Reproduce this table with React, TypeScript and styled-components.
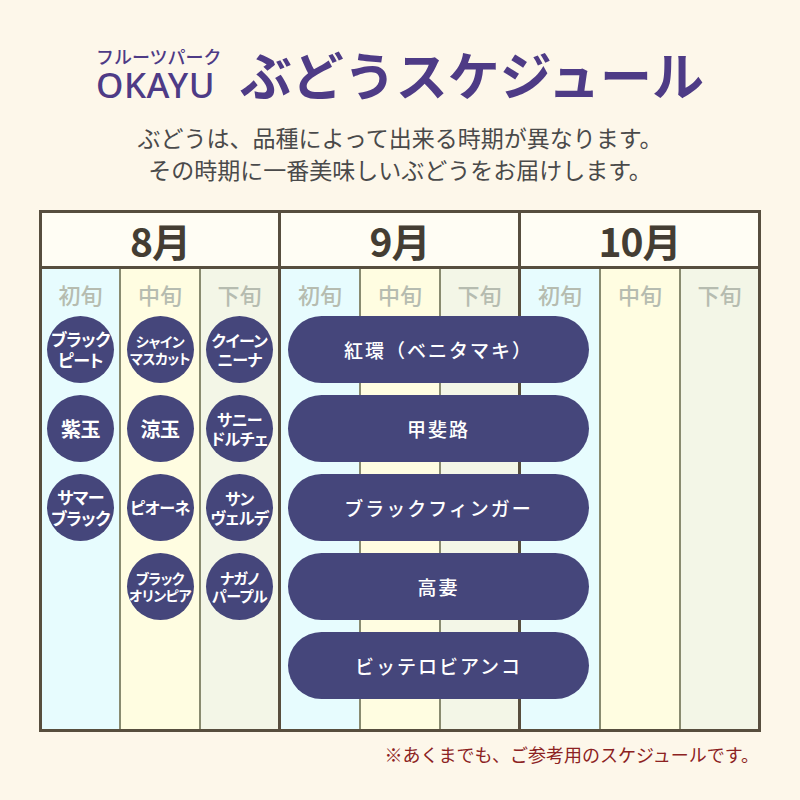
import React from "react";
import styled, { createGlobalStyle } from "styled-components";

const GlobalStyle = createGlobalStyle`
  html, body {
    margin: 0;
    padding: 0;
    background: #fdf7ea;
  }
  body {
    font-family: "Noto Sans CJK JP", "Noto Sans", sans-serif;
  }
  #root {
    width: 800px;
    height: 800px;
  }
`;

const Page = styled.div`
  width: 800px;
  height: 800px;
  padding-top: 44px;
  box-sizing: border-box;
  background: #fdf7ea;
`;

const Header = styled.header`
  display: flex;
  justify-content: center;
  align-items: center;
  gap: 18px;
`;

const Brand = styled.div`
  display: flex;
  flex-direction: column;
  color: #4e3b86;
`;

const BrandSub = styled.span`
  font-family: "Noto Sans CJK JP", sans-serif;
  font-size: 18px;
  font-weight: 500;
  line-height: 22px;
`;

const BrandName = styled.span`
  font-family: "Noto Sans", "Open Sans", sans-serif;
  font-size: 35px;
  font-weight: 500;
  line-height: 36px;
  letter-spacing: 0.5px;
`;

const Title = styled.h1`
  margin: 0;
  font-family: "Noto Sans CJK JP", sans-serif;
  font-size: 52px;
  font-weight: 700;
  line-height: 60px;
  color: #4e3b86;
`;

const Intro = styled.p`
  margin: 17px 0 0;
  text-align: center;
  font-size: 23px;
  line-height: 32px;
  color: #4a4a4a;
`;

const Table = styled.section`
  margin: 25px 0 0 39px;
  width: 722px;
  border: 3px solid #574e3e;
  box-sizing: border-box;
`;

const MonthRow = styled.div`
  display: grid;
  grid-template-columns: 236px 240px 240px;
  border-bottom: 3px solid #574e3e;
  background: #fffdf4;
`;

const MonthCell = styled.div<{ $first?: boolean }>`
  height: 53px;
  display: flex;
  align-items: center;
  justify-content: center;
  border-left: ${(p) => (p.$first ? "0" : "3px solid #574e3e")};
  font-size: 39px;
  font-weight: 700;
  color: #443d33;
  letter-spacing: -1px;
`;

const Body = styled.div`
  display: grid;
  grid-template-columns: 77px 80px 79px 81px 80px 79px 81px 80px 79px;
  grid-template-rows: 47px repeat(4, 79px) 97px;
`;

const columnBg: Record<string, string> = {
  early: "#e7fcfe",
  mid: "#fffde1",
  late: "#f3f6e7",
};

const Column = styled.div<{ $col: number; $kind: string; $border: number }>`
  grid-column: ${(p) => p.$col};
  grid-row: 1 / -1;
  background: ${(p) => columnBg[p.$kind]};
  border-left: ${(p) =>
    p.$border === 0
      ? "0"
      : p.$border === 3
      ? "3px solid #574e3e"
      : "2px solid #898b70"};
`;

const ColumnLabel = styled.div`
  height: 47px;
  padding-top: 3px;
  box-sizing: border-box;
  display: flex;
  align-items: center;
  justify-content: center;
  font-size: 22px;
  font-weight: 500;
  color: #b6bcb0;
`;

const Circle = styled.div<{ $col: number; $row: number; $shift: number; $size: number }>`
  grid-column: ${(p) => p.$col};
  grid-row: ${(p) => p.$row};
  align-self: start;
  justify-self: center;
  margin-left: ${(p) => p.$shift}px;
  width: 67px;
  height: 67px;
  border-radius: 50%;
  background: #45467b;
  color: #ffffff;
  display: flex;
  flex-direction: column;
  align-items: center;
  justify-content: center;
  font-size: ${(p) => p.$size}px;
  font-weight: 700;
  line-height: 1.18;
  font-feature-settings: "palt";
  letter-spacing: -0.5px;
  white-space: nowrap;
  text-align: center;
  z-index: 1;
`;

const CircleLine = styled.span`
  display: block;
`;

const Pill = styled.div<{ $row: number }>`
  grid-column: 4 / 8;
  grid-row: ${(p) => p.$row};
  align-self: start;
  margin: 0 10px;
  height: 67px;
  border-radius: 34px;
  background: #45467b;
  color: #ffffff;
  display: flex;
  align-items: center;
  justify-content: center;
  font-size: 19px;
  font-weight: 500;
  letter-spacing: 2px;
  z-index: 1;
`;

const Note = styled.p`
  margin: 9px 0 0 39px;
  width: 720px;
  text-align: right;
  font-size: 18px;
  line-height: 26px;
  color: #8c2222;
`;

type CircleItem = { col: number; row: number; lines: string[]; size: number };

const circles: CircleItem[] = [
  { col: 1, row: 2, lines: ["ブラック", "ピート"], size: 17 },
  { col: 1, row: 3, lines: ["紫玉"], size: 20 },
  { col: 1, row: 4, lines: ["サマー", "ブラック"], size: 17 },
  { col: 2, row: 2, lines: ["シャイン", "マスカット"], size: 14 },
  { col: 2, row: 3, lines: ["涼玉"], size: 20 },
  { col: 2, row: 4, lines: ["ピオーネ"], size: 16 },
  { col: 2, row: 5, lines: ["ブラック", "オリンピア"], size: 14 },
  { col: 3, row: 2, lines: ["クイーン", "ニーナ"], size: 16 },
  { col: 3, row: 3, lines: ["サニー", "ドルチェ"], size: 16 },
  { col: 3, row: 4, lines: ["サン", "ヴェルデ"], size: 16 },
  { col: 3, row: 5, lines: ["ナガノ", "パープル"], size: 15 },
];

const pills = ["紅環（ベニタマキ）", "甲斐路", "ブラックフィンガー", "高妻", "ビッテロビアンコ"];

const months = ["8月", "9月", "10月"];
const periods = [
  { label: "初旬", kind: "early" },
  { label: "中旬", kind: "mid" },
  { label: "下旬", kind: "late" },
];

export default function App() {
  const columns = [0, 1, 2, 3, 4, 5, 6, 7, 8].map((i) => {
    const p = periods[i % 3];
    const border = i === 0 ? 0 : i % 3 === 0 ? 3 : 2;
    return { col: i + 1, ...p, border };
  });

  return (
    <>
      <GlobalStyle />
      <Page>
        <Header>
          <Brand>
            <BrandSub>フルーツパーク</BrandSub>
            <BrandName>OKAYU</BrandName>
          </Brand>
          <Title>ぶどうスケジュール</Title>
        </Header>
        <Intro>
          ぶどうは、品種によって出来る時期が異なります。
          <br />
          その時期に一番美味しいぶどうをお届けします。
        </Intro>
        <Table>
          <MonthRow>
            {months.map((m, i) => (
              <MonthCell key={m} $first={i === 0}>
                {m}
              </MonthCell>
            ))}
          </MonthRow>
          <Body>
            {columns.map((c) => (
              <Column key={c.col} $col={c.col} $kind={c.kind} $border={c.border}>
                <ColumnLabel>{c.label}</ColumnLabel>
              </Column>
            ))}
            {circles.map((c, i) => (
              <Circle
                key={i}
                $col={c.col}
                $row={c.row}
                $shift={c.col === 1 ? 0 : 2}
                $size={c.size}
              >
                {c.lines.map((l) => (
                  <CircleLine key={l}>{l}</CircleLine>
                ))}
              </Circle>
            ))}
            {pills.map((p, i) => (
              <Pill key={p} $row={i + 2}>
                {p}
              </Pill>
            ))}
          </Body>
        </Table>
        <Note>※あくまでも、ご参考用のスケジュールです。</Note>
      </Page>
    </>
  );
}
